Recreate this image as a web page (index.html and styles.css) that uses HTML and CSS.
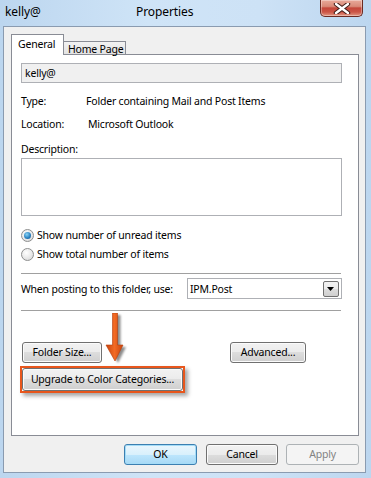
FILE: index.html
```html
<!DOCTYPE html>
<html>
<head>
<meta charset="utf-8">
<link rel="stylesheet" href="styles.css">
</head>
<body>
<div class="window">
  <div class="titlebar">
    <span class="title-account">kelly@</span>
    <span class="title-main">Properties</span>
    <div class="close-btn">
      <svg width="20" height="11" viewBox="0 0 20 11"><path d="M4 1 L16 10 M16 1 L4 10" stroke="#3d1a16" stroke-width="4.4" stroke-linecap="round"/><path d="M4 1 L16 10 M16 1 L4 10" stroke="#fff" stroke-width="2.4" stroke-linecap="round"/></svg>
    </div>
  </div>
  <div class="client">
    <div class="tabs">
      <div class="tab active">General</div>
      <div class="tab">Home Page</div>
    </div>
    <div class="panel">
      <div class="namefield">kelly@</div>
      <div class="info-row row-type"><span class="info-label">Type:</span><span class="info-value">Folder containing Mail and Post Items</span></div>
      <div class="info-row row-location"><span class="info-label">Location:</span><span class="info-value loc">Microsoft Outlook</span></div>
      <div class="desc-label">Description:</div>
      <div class="desc-box"></div>
      <div class="radio-row first"><span class="radio checked"></span><span>Show number of unread items</span></div>
      <div class="radio-row"><span class="radio"></span><span>Show total number of items</span></div>
      <div class="sep sep1"></div>
      <div class="post-row">
        <span>When posting to this folder, use:</span>
        <div class="combo"><span class="combo-text">IPM.Post</span><span class="combo-btn"><svg width="8" height="4" viewBox="0 0 8 4"><path d="M0 0 H7 L3.5 4 Z" fill="#000"/></svg></span></div>
      </div>
      <div class="sep sep2"></div>
      <div class="btn-row">
        <button class="btn folder">Folder Size...</button>
        <button class="btn advanced">Advanced...</button>
      </div>
      <div class="highlight"><button class="btn upgrade">Upgrade to Color Categories...</button></div>
      <svg class="arrow" width="32" height="58" viewBox="0 0 32 58">
        <defs>
          <linearGradient id="ag" x1="0" x2="1" y1="0" y2="0">
            <stop offset="0" stop-color="#c8440f"/>
            <stop offset="0.5" stop-color="#f26a24"/>
            <stop offset="1" stop-color="#c8440f"/>
          </linearGradient>
          <filter id="blur" x="-50%" y="-50%" width="200%" height="200%">
            <feGaussianBlur stdDeviation="1.2"/>
          </filter>
        </defs>
        <path d="M9.5 0 H14.5 V32 H20 L12 48 L3 32 H9.5 Z" fill="#000" opacity="0.45" transform="translate(3,2)" filter="url(#blur)"/>
        <path d="M9.5 0 H14.5 V32 H20 L12 48 L3 32 H9.5 Z" fill="url(#ag)" stroke="#b63c0c" stroke-width="0.6"/>
      </svg>
    </div>
    <div class="footer">
      <button class="btn default ok">OK</button>
      <button class="btn cancel">Cancel</button>
      <button class="btn disabled apply">Apply</button>
    </div>
  </div>
</div>
</body>
</html>
```

FILE: styles.css
```css
* { box-sizing: border-box; }
body {
  margin: 0;
  font-family: "Noto Sans", "Open Sans", sans-serif;
  font-size: 10.5px;
  letter-spacing: -0.2px;
  color: #000;
  white-space: nowrap;
}
.window {
  width: 371px;
  height: 478px;
  display: flex;
  flex-direction: column;
  background: linear-gradient(90deg, #bcd6ef 0%, #cfe4f7 40%, #cde2f6 70%, #bcd6ef 100%);
}
.titlebar {
  height: 26px;
  display: flex;
  align-items: flex-start;
  padding-left: 5px;
  font-size: 12px;
  letter-spacing: -0.1px;
  line-height: 24px;
  color: #000;
}
.title-account {
  width: 131px;
}
.title-main {
  flex: none;
}
.close-btn {
  margin-left: auto;
  margin-right: 8px;
  width: 43px;
  height: 17px;
  border: 1px solid #6b2a22;
  border-top: none;
  border-radius: 0 0 5px 5px;
  background: linear-gradient(#e9a99a 0%, #d98a78 40%, #c4473a 50%, #cc5546 75%, #e29784 100%);
  box-shadow: inset 0 0 0 1px rgba(255,255,255,0.35);
  display: flex;
  align-items: center;
  justify-content: center;
}
.client {
  flex: 1;
  margin: 0 5px 5px 3px;
  border: 1px solid #8a9bb0;
  background: #f0f0f0;
  padding: 7px 6px 7px 7px;
  display: flex;
  flex-direction: column;
}
.tabs {
  height: 20px;
  display: flex;
  align-items: flex-end;
  position: relative;
  z-index: 1;
}
.tab {
  border: 1px solid #898c95;
  border-bottom: none;
}
.tab.active {
  height: 21px;
  margin-bottom: -1px;
  width: 53px;
  background: #fff;
  line-height: 19px;
  padding-left: 6px;
}
.tab:not(.active) {
  height: 13px;
  width: 63px;
  margin-left: -1px;
  background: linear-gradient(#f2f2f2, #e3e3e3);
  line-height: 15px;
  padding-left: 4px;
}
.panel {
  height: 382px;
  border: 1px solid #898c95;
  background: #fff;
  padding: 8px 16px 0 9px;
  position: relative;
}
.namefield {
  height: 20px;
  border: 1px solid #aeb0b5;
  background: #f0f0f0;
  padding-left: 3px;
  line-height: 18px;
}
.info-row {
  display: flex;
  height: 16px;
  line-height: 16px;
}
.row-type { margin-top: 10px; }
.row-location { margin-top: 7px; }
.info-label { width: 65px; }
.info-value.loc { padding-left: 2px; }
.desc-label {
  margin-top: 9px;
  height: 16px;
  line-height: 16px;
}
.desc-box {
  margin-top: 1px;
  height: 58px;
  border: 1px solid #aeb0b5;
}
.radio-row {
  display: flex;
  align-items: center;
  height: 16px;
  line-height: 16px;
  margin-top: 3px;
}
.radio-row.first { margin-top: 11px; }
.radio {
  width: 13px;
  height: 13px;
  border-radius: 50%;
  border: 1px solid #8e8f8f;
  background: radial-gradient(circle at 40% 35%, #ffffff 0%, #eaeaea 50%, #d2d2d2 100%);
  margin-right: 3px;
  position: relative;
}
.radio.checked::after {
  content: "";
  position: absolute;
  left: 2px;
  top: 2px;
  width: 7px;
  height: 7px;
  border-radius: 50%;
  background: radial-gradient(circle at 40% 35%, #8ad3f4 0%, #2c84c3 55%, #0c4c86 100%);
}
.sep {
  height: 1px;
  background: #a0a0a0;
  margin-right: 1px;
}
.sep1 { margin-top: 11px; }
.post-row {
  margin-top: 4px;
  display: flex;
  align-items: center;
  justify-content: space-between;
  height: 21px;
}
.combo {
  width: 155px;
  height: 21px;
  border: 1px solid #aeb0b5;
  display: flex;
  align-items: center;
  padding-left: 2px;
}
.combo-text { flex: 1; }
.combo-btn {
  width: 16px;
  height: 16px;
  margin-right: 2px;
  border: 1px solid #707070;
  border-radius: 2px;
  background: linear-gradient(#f2f2f2 0%, #ebebeb 50%, #dddddd 50%, #cfcfcf 100%);
  display: flex;
  align-items: center;
  justify-content: center;
}
.sep2 { margin-top: 11px; }
.btn {
  font-family: inherit;
  font-size: 10.5px;
  letter-spacing: -0.2px;
  color: #000;
  height: 21px;
  border: 1px solid #707070;
  border-radius: 3px;
  background: linear-gradient(#f2f2f2 0%, #ebebeb 50%, #dddddd 50%, #cfcfcf 100%);
  box-shadow: inset 0 0 0 1px #fbfbfb;
  padding: 0;
  line-height: 17px;
}
.btn-row {
  margin-top: 31px;
  display: flex;
  padding-left: 1px;
}
.btn.folder { width: 80px; }
.btn.advanced { width: 76px; margin-left: 128px; }
.highlight {
  margin-top: 3px;
  margin-left: -1px;
  width: 165px;
  height: 27px;
  border: 2px solid #e8561c;
  box-shadow: 3px 3px 4px rgba(0,0,0,0.35);
  display: flex;
}
.btn.upgrade {
  width: 161px;
  height: 23px;
}
.arrow {
  position: absolute;
  left: 91px;
  top: 258px;
}
.footer {
  margin-top: 8px;
  display: flex;
  justify-content: flex-end;
}
.btn.ok { width: 73px; }
.btn.cancel { width: 72px; margin-left: 9px; }
.btn.apply { width: 73px; margin-left: 8px; }
.btn.default {
  border-color: #3c7fb1;
  background: linear-gradient(#eaf6fd 0%, #d9f0fc 50%, #bee6fd 50%, #a7d9f5 100%);
  box-shadow: inset 0 0 0 1px #a4dcf7;
}
.btn.disabled {
  border-color: #adb2b5;
  background: #f4f4f4;
  box-shadow: none;
  color: #838383;
}
```
